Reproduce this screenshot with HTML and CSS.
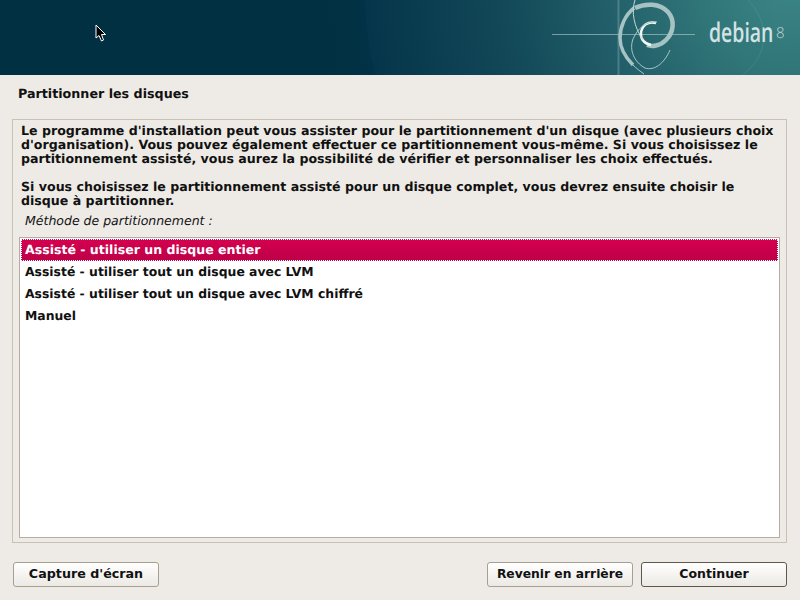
FILE: index.html
```html
<!DOCTYPE html>
<html lang="fr">
<head>
  <meta charset="UTF-8">
  <meta name="viewport" content="width=device-width, initial-scale=1.0">
  <title>Partitionner les disques</title>
  <link rel="stylesheet" href="styles.css">
</head>
<body>
  <!-- Banner -->
  <header class="banner">
    <svg class="banner-art" width="800" height="75" viewBox="0 0 800 75">
      <defs>
        <radialGradient id="glow" gradientUnits="userSpaceOnUse" cx="790" cy="-20" r="470">
          <stop offset="0" stop-color="#3c8686"/>
          <stop offset="0.2" stop-color="#307578"/>
          <stop offset="0.4" stop-color="#225e69"/>
          <stop offset="0.62" stop-color="#124858"/>
          <stop offset="0.905" stop-color="#05354a"/>
          <stop offset="0.906" stop-color="#023245"/>
          <stop offset="1" stop-color="#023043"/>
        </radialGradient>
      </defs>
      <rect width="800" height="75" fill="url(#glow)"/>
      <!-- faint ring behind the logo -->
      <path d="M748 0C768 20 772 52 743 75" fill="none" stroke="#9cc4c4" stroke-width="1" opacity="0.15"/>
      <!-- cross lines -->
      <path d="M552 34.5H695" stroke="#b7d0d0" stroke-width="1" opacity="0.6"/>
      <path d="M618.5 0V75" stroke="#a9c8c8" stroke-width="2" opacity="0.3"/>
      <!-- swirl -->
      <path d="M635 8C645 3 660 3 668 12C675 20 674 32 666 40C660 46 652 47 647 45" fill="none" stroke="#a6c3c4" stroke-width="4.5"/>
      <path d="M634 8C625 15 620 27 620 38C620 47 625 57 633 65" fill="none" stroke="#a6c3c4" stroke-width="3.5"/>
      <path d="M633 65C637 69 640 71 644 74" fill="none" stroke="#a9c8c8" stroke-width="1"/>
      <path d="M656 23C648 21 642 25 641 33C640 39 645 44 651 45" fill="none" stroke="#f2f7f7" stroke-width="2.5"/>
      <path d="M657 22C646 21 638 28 633 39C629 50 634 62 645 68C654 71 664 64 670 50" fill="none" stroke="#a9c8c8" stroke-width="1"/>
      <path d="M635 0C631 12 634 27 643 40" fill="none" stroke="#c2d8d8" stroke-width="1"/>
    </svg>
    <span class="logo-word">debian</span>
    <span class="logo-version">8</span>
    <!-- Mouse pointer -->
    <svg class="pointer" width="12" height="18" viewBox="0 0 12 18">
      <path d="M1 1V14L4 11.5L6.5 17L8.5 16L6.5 10.5H10.5Z" fill="#000" stroke="#fff" stroke-width="1"/>
    </svg>
  </header>

  <main class="content">
    <h1 class="step-title">Partitionner les disques</h1>

    <!-- Question frame -->
    <section class="frame">
      <p class="intro">Le programme d'installation peut vous assister pour le partitionnement d'un disque (avec plusieurs choix d'organisation). Vous pouvez également effectuer ce partitionnement vous-même. Si vous choisissez le partitionnement assisté, vous aurez la possibilité de vérifier et personnaliser les choix effectués.</p>
      <p class="intro">Si vous choisissez le partitionnement assisté pour un disque complet, vous devrez ensuite choisir le disque à partitionner.</p>
      <p class="list-label">Méthode de partitionnement :</p>
      <ul class="choices">
        <li class="choice selected">Assisté - utiliser un disque entier</li>
        <li class="choice">Assisté - utiliser tout un disque avec LVM</li>
        <li class="choice">Assisté - utiliser tout un disque avec LVM chiffré</li>
        <li class="choice">Manuel</li>
      </ul>
    </section>

    <!-- Buttons -->
    <div class="actions">
      <button class="btn btn-screenshot">Capture d'écran</button>
      <button class="btn btn-back">Revenir en arrière</button>
      <button class="btn btn-next">Continuer</button>
    </div>
  </main>
</body>
</html>
```

FILE: styles.css
```css
/* General Reset */
html, body {
  margin: 0;
  padding: 0;
  height: 600px;
  overflow: hidden;
}

body {
  font-family: "DejaVu Sans", sans-serif;
  font-size: 12.6px;
  font-weight: bold;
  color: #111;
  background-color: #eeebe6;
  text-rendering: geometricPrecision;
}

/* Banner */
.banner {
  position: relative;
  height: 75px;
  background-color: #023043;
  overflow: hidden;
}

.banner-art {
  display: block;
}

.logo-word {
  position: absolute;
  left: 709px;
  top: 14px;
  font-family: "Open Sans", sans-serif;
  font-size: 27px;
  line-height: 36px;
  font-weight: 600;
  color: #d3e3e4;
  transform: scaleX(0.72);
  transform-origin: left center;
}

.logo-version {
  position: absolute;
  left: 776px;
  top: 23px;
  font-family: "Open Sans", sans-serif;
  font-size: 15px;
  line-height: 20px;
  font-weight: 300;
  color: #c5dadb;
}

.pointer {
  position: absolute;
  left: 95px;
  top: 24px;
}

/* Page Content */
.content {
  height: 525px;
  padding: 0 13px 0 12px;
  box-sizing: border-box;
  display: flex;
  flex-direction: column;
}

.step-title {
  margin: 0;
  padding: 11px 6px 0;
  height: 44px;
  box-sizing: border-box;
  font-size: 12.7px;
  line-height: 16px;
  font-weight: bold;
}

/* Question frame */
.frame {
  height: 424px;
  box-sizing: border-box;
  border: 1px solid #c9c1b4;
  padding: 4px 6px;
  display: flex;
  flex-direction: column;
}

.intro {
  margin: 0 0 14px;
  padding: 0 2px;
  line-height: 14px;
}

.list-label {
  margin: -12px 0 0;
  padding: 3px 6px 0;
  height: 27px;
  box-sizing: border-box;
  font-size: 12.5px;
  line-height: 16px;
  font-weight: normal;
  font-style: italic;
}

/* Choice list */
.choices {
  flex: 1;
  margin: 0;
  padding: 1px;
  list-style: none;
  background-color: #fff;
  border: 1px solid #b5ad9f;
  font-size: 12.4px;
}

.choice {
  height: 22px;
  padding: 0 4px;
  line-height: 22px;
}

.selected {
  color: #fff;
  font-size: 12.55px;
  background: linear-gradient(#d5004f, #bd0048);
  outline: 1px dotted #fff;
  outline-offset: -1px;
}

/* Buttons */
.actions {
  display: flex;
  margin-top: 19px;
}

.btn {
  height: 25px;
  padding: 0 0 2px;
  font-family: inherit;
  font-size: 12.5px;
  font-weight: bold;
  color: #111;
  background: linear-gradient(#fff, #ece9e4);
  border: 1px solid #a89f90;
  border-radius: 3px;
}

.btn-screenshot {
  width: 146px;
  margin-left: 1px;
  font-size: 12.7px;
}

.btn-back {
  width: 146px;
  margin-left: auto;
  font-size: 12.3px;
}

.btn-next {
  width: 146px;
  margin-left: 8px;
  border-color: #5f574c;
}
```
